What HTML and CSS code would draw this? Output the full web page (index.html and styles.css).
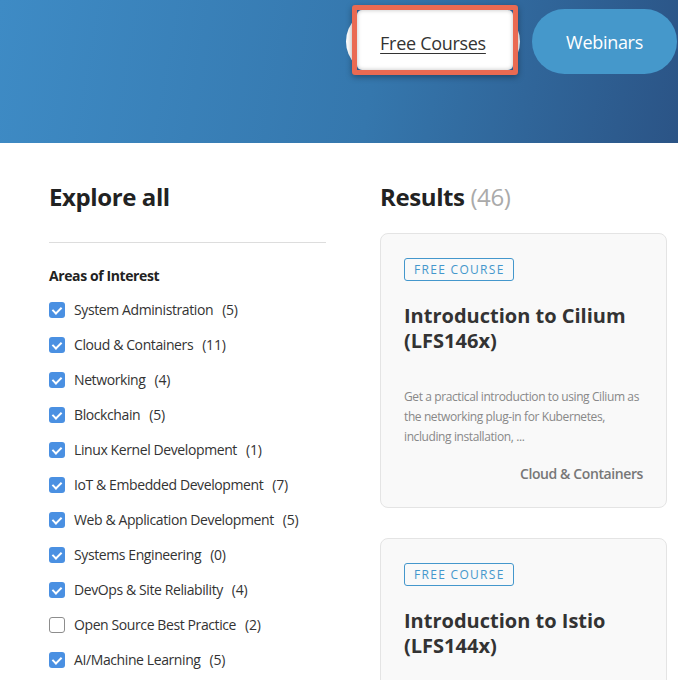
FILE: index.html
```html
<!DOCTYPE html>
<html lang="en">
<head>
<meta charset="utf-8">
<title>Free Courses</title>
<link rel="stylesheet" href="styles.css">
</head>
<body>
<header class="hero">
  <nav class="tabs">
    <a class="pill pill-active" href="#"><span class="pill-text">Free Courses</span></a>
    <a class="pill pill-blue" href="#">Webinars</a>
    <div class="highlight"><div class="highlight-inner"></div></div>
  </nav>
</header>
<main class="content">
  <aside class="filters">
    <h2 class="heading">Explore all</h2>
    <hr class="divider">
    <h3 class="group-title">Areas of Interest</h3>
    <ul class="options">
      <li class="option"><span class="box checked"></span><span class="label">System Administration</span><span class="count">(5)</span></li>
      <li class="option"><span class="box checked"></span><span class="label">Cloud &amp; Containers</span><span class="count">(11)</span></li>
      <li class="option"><span class="box checked"></span><span class="label">Networking</span><span class="count">(4)</span></li>
      <li class="option"><span class="box checked"></span><span class="label">Blockchain</span><span class="count">(5)</span></li>
      <li class="option"><span class="box checked"></span><span class="label">Linux Kernel Development</span><span class="count">(1)</span></li>
      <li class="option"><span class="box checked"></span><span class="label">IoT &amp; Embedded Development</span><span class="count">(7)</span></li>
      <li class="option"><span class="box checked"></span><span class="label">Web &amp; Application Development</span><span class="count">(5)</span></li>
      <li class="option"><span class="box checked"></span><span class="label">Systems Engineering</span><span class="count">(0)</span></li>
      <li class="option"><span class="box checked"></span><span class="label">DevOps &amp; Site Reliability</span><span class="count">(4)</span></li>
      <li class="option"><span class="box"></span><span class="label">Open Source Best Practice</span><span class="count">(2)</span></li>
      <li class="option"><span class="box checked"></span><span class="label">AI/Machine Learning</span><span class="count">(5)</span></li>
    </ul>
  </aside>
  <section class="results">
    <h2 class="heading">Results <span class="total">(46)</span></h2>
    <article class="card">
      <span class="badge">FREE COURSE</span>
      <h4 class="card-title">Introduction to Cilium (LFS146x)</h4>
      <p class="desc">Get a practical introduction to using Cilium as the networking plug-in for Kubernetes, including installation, ...</p>
      <p class="category">Cloud &amp; Containers</p>
    </article>
    <article class="card">
      <span class="badge">FREE COURSE</span>
      <h4 class="card-title">Introduction to Istio (LFS144x)</h4>
      <p class="desc">Learn the basics of Istio service mesh, including traffic management, security and observability ...</p>
      <p class="category">Cloud &amp; Containers</p>
    </article>
  </section>
</main>
</body>
</html>
```
FILE: styles.css
```css
* { box-sizing: border-box; }
html, body { margin: 0; padding: 0; }
body {
  font-family: "Open Sans", "Liberation Sans", sans-serif;
  color: #333;
  background: #fff;
  overflow: hidden;
  height: 680px;
}
.hero {
  height: 143px;
  background: linear-gradient(100deg, #3e8bc5 0%, #3577ad 55%, #2b5486 100%);
  padding: 9px 1px 0 0;
}
.tabs {
  position: relative;
  display: flex;
  justify-content: flex-end;
  gap: 12px;
}
.pill {
  height: 65px;
  border-radius: 33px;
  display: flex;
  align-items: center;
  justify-content: center;
  font-size: 18px;
  letter-spacing: -0.3px;
  text-decoration: none;
}
.pill-active {
  width: 174px;
  background: #fff;
  color: #333;
}
.pill-text {
  position: relative;
  z-index: 2;
  text-decoration: underline;
  text-underline-offset: 3px;
  padding-top: 2px;
}
.pill-blue {
  width: 145px;
  background: #4598cb;
  color: #fff;
}
.highlight {
  position: absolute;
  z-index: 1;
  left: 352px;
  top: -4px;
  width: 166px;
  height: 70px;
  border: 5px solid #ea6a52;
  border-radius: 3px;
  background: #2c5a8f;
  box-shadow: 0 2px 6px rgba(0,0,0,0.35);
}
.highlight-inner {
  width: 100%;
  height: 100%;
  background: #fff;
  border-radius: 5px;
  box-shadow: inset 0 0 4px rgba(0,0,0,0.25);
}
.content {
  display: flex;
  gap: 54px;
  padding: 37px 11px 0 49px;
}
.filters { width: 277px; flex: none; }
.results { flex: 1; }
.heading {
  margin: 0;
  font-size: 24px;
  font-weight: 700;
  line-height: 34px;
  color: #222;
  letter-spacing: -0.4px;
}
.total { color: #aaa; font-weight: 400; }
.divider {
  border: 0;
  border-top: 1px solid #ddd;
  margin: 28px 0 0;
}
.group-title {
  margin: 23px 0 0;
  font-size: 14px;
  font-weight: 700;
  line-height: 20px;
  color: #222;
  letter-spacing: -0.4px;
}
.options { list-style: none; margin: 6px 0 0; padding: 0; }
.option {
  display: flex;
  align-items: center;
  height: 35px;
  font-size: 14px;
  color: #333;
}
.box {
  width: 16px;
  height: 16px;
  border-radius: 3px;
  border: 1px solid #8d8d8d;
  background: #fff;
  margin-right: 9px;
  flex: none;
  position: relative;
}
.box.checked {
  border: 0;
  background: #4a90e2;
}
.box.checked::after {
  content: "";
  position: absolute;
  left: 5px;
  top: 3px;
  width: 4px;
  height: 7px;
  border-right: 2px solid #fff;
  border-bottom: 2px solid #fff;
  transform: rotate(45deg);
}
.label { letter-spacing: -0.4px; }
.count { margin-left: 9px; letter-spacing: -0.2px; }
.card {
  margin-top: 19px;
  background: #f9f9f9;
  border: 1px solid #e4e4e4;
  border-radius: 8px;
  padding: 23px 23px 23px 23px;
  margin-bottom: 30px;
}
.card + .card { margin-top: 0; }
.badge {
  display: inline-block;
  font-size: 12px;
  letter-spacing: 1.3px;
  line-height: 17px;
  color: #4497cc;
  border: 1px solid #4497cc;
  border-radius: 3px;
  padding: 2px 8px 2px 9px;
}
.card-title {
  margin: 22px 0 0;
  font-size: 20px;
  font-weight: 700;
  line-height: 25px;
  color: #333;
  min-height: 84px;
}
.desc {
  margin: 0;
  font-size: 12px;
  line-height: 20px;
  color: #888;
  letter-spacing: -0.4px;
}
.category {
  margin: 17px 0 0;
  text-align: right;
  font-size: 14px;
  font-weight: 600;
  line-height: 20px;
  color: #777;
  letter-spacing: -0.4px;
}
```
